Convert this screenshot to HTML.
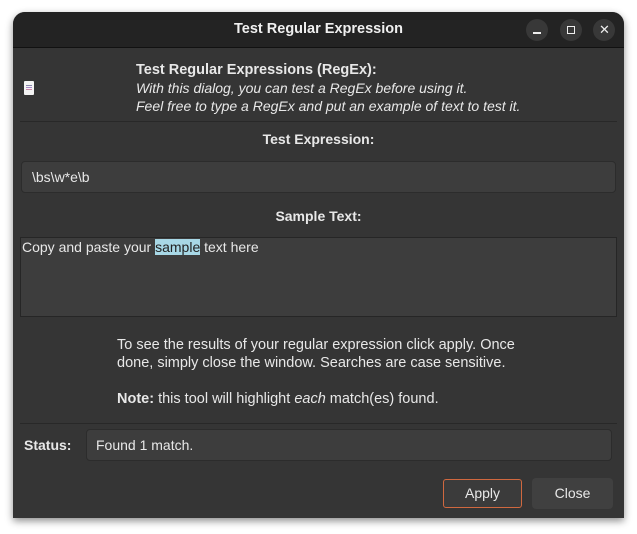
<!DOCTYPE html>
<html><head><meta charset="utf-8"><style>
*{box-sizing:border-box;margin:0;padding:0}
body{width:637px;height:534px;background:#fff;font-family:"Liberation Sans",sans-serif;color:#e8e8e8;position:relative;overflow:hidden;font-size:14px}
.win{position:absolute;left:13px;top:12px;width:611px;height:506px;background:#353535;border-radius:12px 12px 0 0;box-shadow:0 3px 8px rgba(0,0,0,.45);overflow:hidden}
.tb{position:absolute;left:0;top:0;width:611px;height:36px;background:#232323;border-bottom:1px solid #111}
.title{position:absolute;left:0;right:0;top:9px;text-align:center;font-weight:bold;font-size:14.5px;color:#f0f0f0}
.btn{position:absolute;top:7px;width:22px;height:22px;border-radius:50%;background:#383838}
.abs{position:absolute}
.field{position:absolute;background:#3d3d3d;border:1px solid #2c2c2c;border-radius:4px}
.sep{position:absolute;left:7px;width:597px;height:1px;background:#282828}
.b{font-weight:bold}
</style></head><body>
<div class="win">
 <div class="tb">
  <div class="title">Test Regular Expression</div>
  <div class="btn" style="left:513px"><div class="abs" style="left:7px;top:13px;width:8px;height:1.5px;background:#eee"></div></div>
  <div class="btn" style="left:547px"><div class="abs" style="left:7px;top:7px;width:8px;height:8px;border:1.5px solid #eee"></div></div>
  <div class="btn" style="left:580px"><div class="abs" style="left:6px;top:3px;font-size:13px;color:#eee;font-family:'Liberation Sans',sans-serif">✕</div></div>
 </div>
 <div class="abs" style="left:11px;top:69px;width:10px;height:14px;background:#f4f4f4;border-radius:1px">
  <div class="abs" style="left:2px;top:4px;width:6px;height:1px;background:#88a"></div>
  <div class="abs" style="left:2px;top:6px;width:6px;height:1px;background:#a8c"></div>
  <div class="abs" style="left:2px;top:8px;width:6px;height:1px;background:#c8a"></div>
 </div>
 <div class="abs b" style="left:123px;top:50px;font-size:14.5px">Test Regular Expressions (RegEx):</div>
 <div class="abs" style="left:123px;top:68px;font-style:italic;font-size:14px">With this dialog, you can test a RegEx before using it.</div>
 <div class="abs" style="left:123px;top:86px;font-style:italic;font-size:14px">Feel free to type a RegEx and put an example of text to test it.</div>
 <div class="sep" style="top:109px"></div>
 <div class="abs b" style="left:0;right:0;top:119px;text-align:center">Test Expression:</div>
 <div class="field" style="left:8px;top:149px;width:595px;height:32px"><span class="abs" style="left:10px;top:7px">\bs\w*e\b</span></div>
 <div class="abs b" style="left:0;right:0;top:196px;text-align:center">Sample Text:</div>
 <div class="field" style="left:7px;top:225px;width:597px;height:80px;border-radius:0;border-color:#262626"><span class="abs" style="left:1px;top:1px;white-space:nowrap">Copy and paste your <span style="background:#a8d8e6;color:#222">sample</span> text here</span></div>
 <div class="abs" style="left:104px;top:324px;line-height:18px;font-size:14.5px;white-space:nowrap">To see the results of your regular expression click apply. Once<br>done, simply close the window. Searches are case sensitive.<br><br><b>Note:</b> this tool will highlight <i>each</i> match(es) found.</div>
 <div class="sep" style="top:411px"></div>
 <div class="abs b" style="left:11px;top:425px">Status:</div>
 <div class="field" style="left:73px;top:417px;width:526px;height:32px"><span class="abs" style="left:9px;top:7px">Found 1 match.</span></div>
 <div class="abs" style="left:430px;top:467px;width:79px;height:29px;border:1px solid #d0683f;border-radius:3px;background:#3b3b3b;text-align:center;line-height:27px">Apply</div>
 <div class="abs" style="left:519px;top:466px;width:81px;height:31px;border-radius:4px;background:#404040;text-align:center;line-height:31px">Close</div>
</div>
</body></html>
